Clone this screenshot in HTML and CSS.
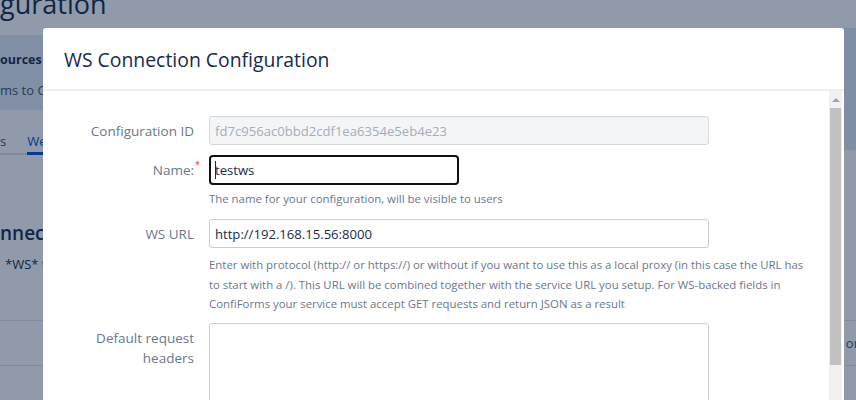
FILE: index.html
```html
<!DOCTYPE html>
<html lang="en">
<head>
<meta charset="utf-8">
<title>WS Connection Configuration</title>
<link rel="stylesheet" href="styles.css">
</head>
<body>
<div class="page">
  <div class="bg-head">guration</div>
  <div class="bg-main">
    <div class="bg-left">
      <div class="bg-panel">
        <div class="bg-bold">ources for ConfiForms</div>
        <div class="bg-text">ms to ConfiForms</div>
      </div>
      <div class="bg-tabs">
        <span class="bg-tab">s</span>
        <span class="bg-tab active">Web services</span>
      </div>
      <div class="bg-h2">nnections</div>
      <div class="bg-p">*WS* type</div>
    </div>
    <div class="bg-side"></div>
  </div>
  <div class="bg-table">
    <div class="bg-tr"><span class="bg-td-right">or</span></div>
    <div class="bg-tr"></div>
  </div>
</div>
<div class="overlay"></div>
<div class="modal">
  <div class="modal-header">
    <h2 class="modal-title">WS Connection Configuration</h2>
  </div>
  <div class="modal-body">
    <div class="form">
      <div class="row">
        <div class="label">Configuration ID</div>
        <div class="field">
          <div class="input disabled">fd7c956ac0bbd2cdf1ea6354e5eb4e23</div>
        </div>
      </div>
      <div class="row">
        <div class="label">Name:<span class="req">*</span></div>
        <div class="field">
          <div class="input focus"><span class="caret"></span>testws</div>
          <div class="help">The name for your configuration, will be visible to users</div>
        </div>
      </div>
      <div class="row">
        <div class="label">WS URL</div>
        <div class="field">
          <div class="input">http://192.168.15.56:8000</div>
          <div class="help wide">Enter with protocol (http:// or https://) or without if you want to use this as a local proxy (in this case the URL has to start with a /). This URL will be combined together with the service URL you setup. For WS-backed fields in ConfiForms your service must accept GET requests and return JSON as a result</div>
        </div>
      </div>
      <div class="row">
        <div class="label">Default request headers</div>
        <div class="field">
          <div class="textarea"></div>
        </div>
      </div>
    </div>
    <div class="scrollbar">
      <div class="sb-arrow"></div>
      <div class="sb-thumb"></div>
    </div>
  </div>
</div>
</body>
</html>
```

FILE: styles.css
```css
* { box-sizing: border-box; }
html, body { margin: 0; padding: 0; }
body {
  width: 856px;
  height: 400px;
  overflow: hidden;
  position: relative;
  font-family: "Open Sans", "Noto Sans", sans-serif;
  color: #172b4d;
  background: #fff;
}

/* background page */
.page {
  height: 400px;
  display: flex;
  flex-direction: column;
  white-space: nowrap;
  overflow: hidden;
}
.page > * { flex-shrink: 0; }
.bg-head {
  height: 28px;
  font-size: 27px;
  line-height: 28px;
  margin-top: -10px;
  margin-bottom: 10px;
  color: #172b4d;
}
.bg-main {
  display: flex;
  justify-content: space-between;
  height: 292px;
}
.bg-left { width: 43px; overflow: hidden; }
.bg-panel {
  margin-top: 7px;
  height: 75px;
  background: #e6edf9;
  padding-top: 15px;
}
.bg-bold { font-size: 12.5px; font-weight: 700; line-height: 20px; }
.bg-text { font-size: 13px; line-height: 20px; margin-top: 10px; color: #42526e; }
.bg-tabs {
  margin-top: 20px;
  height: 25px;
  border-bottom: 2px solid #dfe1e6;
  display: flex;
  gap: 20px;
  font-size: 13px;
  line-height: 22px;
  color: #42526e;
}
.bg-tab { height: 25px; }
.bg-tab.active { color: #0052cc; border-bottom: 3px solid #0052cc; margin-left: 1px; }
.bg-h2 { margin-top: 65px; font-size: 19px; font-weight: 600; line-height: 26px; }
.bg-p { margin-top: 8px; font-size: 13px; line-height: 20px; padding-left: 5px; }
.bg-side {
  width: 12px;
  height: 122px;
  background: #e2e9f6;
}
.bg-table { display: flex; flex-direction: column; }
.bg-tr {
  height: 45px;
  border-top: 1px solid #dfe1e6;
  display: flex;
  justify-content: flex-end;
  align-items: center;
  font-size: 13px;
  color: #42526e;
}
.bg-td-right { margin-right: -3px; }

.overlay {
  position: absolute;
  inset: 0;
  background: rgba(9, 30, 66, 0.45);
}

/* modal */
.modal {
  position: absolute;
  left: 43px;
  top: 28px;
  width: 801px;
  height: 420px;
  background: #fff;
  border-radius: 3px;
  display: flex;
  flex-direction: column;
}
.modal-header {
  padding: 20px 21px 17px;
  border-bottom: 2px solid #eceef1;
}
.modal-title {
  margin: 0;
  font-size: 19.4px;
  line-height: 24px;
  font-weight: 500;
  color: #172b4d;
}
.modal-body {
  flex: 1;
  display: flex;
}
.form {
  flex: 1;
  padding: 25px 0 0 21px;
  display: flex;
  flex-direction: column;
  gap: 10px;
}
.row {
  display: grid;
  grid-template-columns: 130px 1fr;
  column-gap: 15px;
}
.label {
  text-align: right;
  font-size: 13.5px;
  line-height: 20px;
  padding-top: 5px;
  color: #6b778c;
}
.req {
  color: #de350b;
  font-size: 9px;
  vertical-align: 7px;
  line-height: 0;
  margin-left: 1px;
  margin-right: -6px;
}
.input {
  width: 500px;
  height: 29px;
  border: 1px solid #c9ccd1;
  border-radius: 3px;
  padding: 0 5px;
  font-size: 13.1px;
  color: #172b4d;
  background: #fff;
  white-space: nowrap;
  display: flex;
  align-items: center;
}
.input.disabled {
  background: #f4f5f7;
  color: #a5adba;
  border-color: #d5d8dd;
}
.input.focus {
  width: 250px;
  height: 30px;
  border: 2px solid #111;
  border-radius: 4px;
  padding-left: 4px;
}
.caret {
  width: 1px;
  height: 18px;
  background: #172b4d;
  margin-right: -1px;
}
.help {
  margin-top: 4px;
  font-size: 11.4px;
  line-height: 20px;
  color: #6b778c;
}
.help.wide {
  margin-top: 7px;
  width: 602px;
  line-height: 19.5px;
  margin-bottom: -1px;
}
.textarea {
  width: 500px;
  height: 110px;
  border: 1px solid #c9ccd1;
  border-radius: 3px;
  background: #fff;
}

/* scrollbar */
.scrollbar {
  width: 13px;
  margin-right: 2px;
  background: #f1f1f1;
  display: flex;
  flex-direction: column;
  align-items: center;
}
.sb-arrow {
  margin-top: 7px;
  width: 0;
  height: 0;
  border-left: 4px solid transparent;
  border-right: 4px solid transparent;
  border-bottom: 4px solid #a3a3a3;
}
.sb-thumb {
  margin-top: 6px;
  width: 11px;
  height: 257px;
  background: #c1c1c1;
}
```
